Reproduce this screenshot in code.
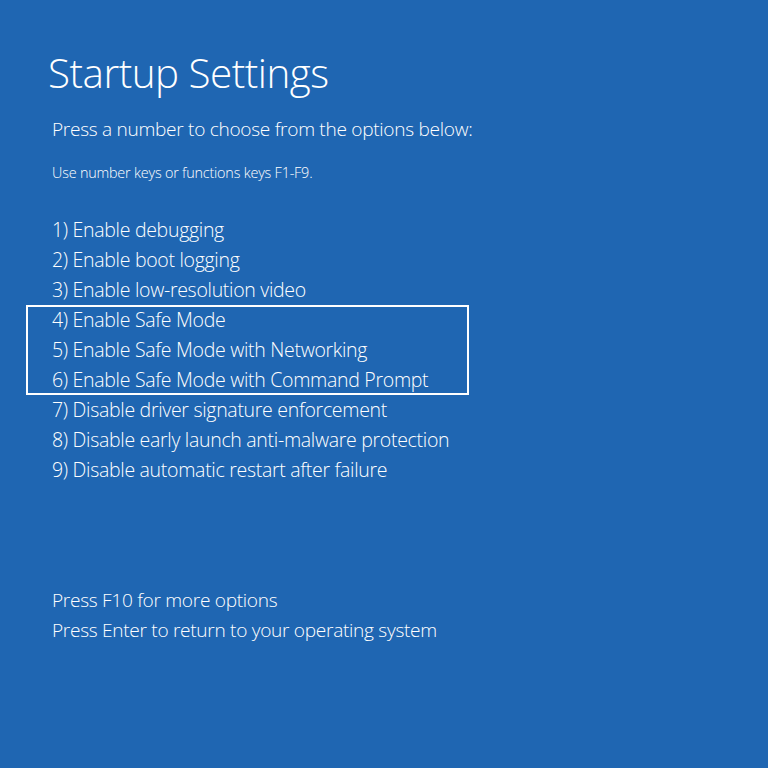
import React from "react";

const items = [
  "1) Enable debugging",
  "2) Enable boot logging",
  "3) Enable low-resolution video",
  "4) Enable Safe Mode",
  "5) Enable Safe Mode with Networking",
  "6) Enable Safe Mode with Command Prompt",
  "7) Disable driver signature enforcement",
  "8) Disable early launch anti-malware protection",
  "9) Disable automatic restart after failure",
];

export default function App() {
  const font = { fontFamily: '"Open Sans", "Noto Sans", sans-serif' };
  return (
    <div
      className="w-[768px] h-[768px] bg-[#1f66b2] text-white overflow-hidden pl-[52px] font-light"
      style={font}
    >
      <h1 className="text-[40.4px] leading-[48px] font-light ml-[-4px] mt-[49px] tracking-[-0.5px]">
        Startup Settings
      </h1>
      <p className="text-[19.1px] leading-[24px] mt-[20px] tracking-[-0.3px]">
        Press a number to choose from the options below:
      </p>
      <p className="text-[14.4px] leading-[18px] mt-[23px] tracking-[-0.2px]">
        Use number keys or functions keys F1-F9.
      </p>
      <div className="mt-[33px] text-[19.5px] leading-[30px] tracking-[-0.3px]">
        {items.slice(0, 3).map((t) => (
          <div key={t}>{t}</div>
        ))}
        <div className="ml-[-26px] w-[443px] shadow-[inset_0_0_0_2px_#ffffff] pl-[26px]">
          {items.slice(3, 6).map((t) => (
            <div key={t}>{t}</div>
          ))}
        </div>
        {items.slice(6).map((t) => (
          <div key={t}>{t}</div>
        ))}
      </div>
      <div className="mt-[100px] text-[19.1px] leading-[30px] tracking-[-0.3px]">
        <div>Press F10 for more options</div>
        <div>Press Enter to return to your operating system</div>
      </div>
    </div>
  );
}
